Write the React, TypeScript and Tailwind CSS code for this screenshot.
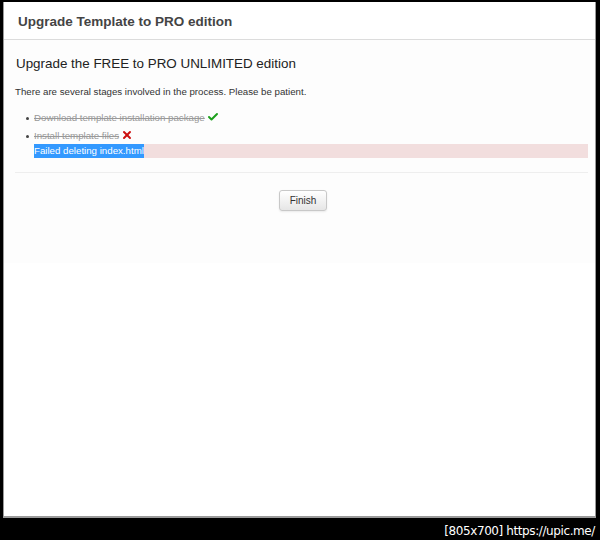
import { Check, X } from "lucide-react";

export default function App() {
  return (
    <div className="w-[600px] h-[540px] bg-black flex flex-col font-['Liberation_Sans',Arial,sans-serif]">
      <div className="mt-[2px] ml-[3px] w-[593px] h-[516px] bg-white border-l border-r border-b-2 border-[#9a9a9a] flex flex-col">
        <div className="h-[38px] border-b border-[#dcdcdc] flex items-center pt-[4px] pl-[14px] bg-white">
          <h1 className="text-[13.5px] font-bold text-[#444]">Upgrade Template to PRO edition</h1>
        </div>

        <div className="bg-[#fdfdfd] h-[223px] pl-[12px] pr-[7px] pt-[15px] flex flex-col">
          <h2 className="text-[13.4px] text-[#222] leading-[18px]">Upgrade the FREE to PRO UNLIMITED edition</h2>
          <p className="mt-[12px] text-[9.7px] text-[#333] leading-[14px] -ml-[1px]">
            There are several stages involved in the process. Please be patient.
          </p>

          <ul className="mt-[10px] text-[9.7px] leading-[18px] text-[#999]">
            <li className="flex items-start">
              <span className="mt-[8px] ml-[10px] mr-[5px] w-[3px] h-[3px] rounded-full bg-[#444] shrink-0" />
              <div>
                <span className="line-through">Download template installation package</span>
                <Check className="inline w-[12px] h-[12px] ml-[2px] -mt-[2px] text-[#1ca01c]" strokeWidth={4} />
              </div>
            </li>
            <li className="flex items-start">
              <span className="mt-[8px] ml-[10px] mr-[5px] w-[3px] h-[3px] rounded-full bg-[#444] shrink-0" />
              <div className="flex-1">
                <span className="line-through">Install template files</span>
                <X className="inline w-[12px] h-[12px] ml-[2px] -mt-[2px] text-[#cc1010]" strokeWidth={4} />
                <div className="-mt-[1px] bg-[#f2dede] h-[14px] flex items-center">
                  <span className="bg-[#3399ff] text-white leading-[14px]">Failed deleting index.html</span>
                </div>
              </div>
            </li>
          </ul>

          <div className="mt-[14px] ml-[-1px] border-t border-[#eeeeee]" />

          <div className="flex justify-center mt-[17px] pl-[2px]">
            <button className="h-[21px] w-[48px] text-[10px] text-[#333] border border-[#c8c8c8] rounded-[3px] bg-gradient-to-b from-white to-[#e6e6e6] shadow-[0_1px_2px_rgba(0,0,0,0.08)]">
              Finish
            </button>
          </div>
        </div>
      </div>
      <div className="flex justify-end pr-[5px] mt-[4px]">
        <span className="text-white text-[12px] font-['DejaVu_Sans',sans-serif] tracking-[-0.4px]">
          [805x700] https://upic.me/
        </span>
      </div>
    </div>
  );
}
